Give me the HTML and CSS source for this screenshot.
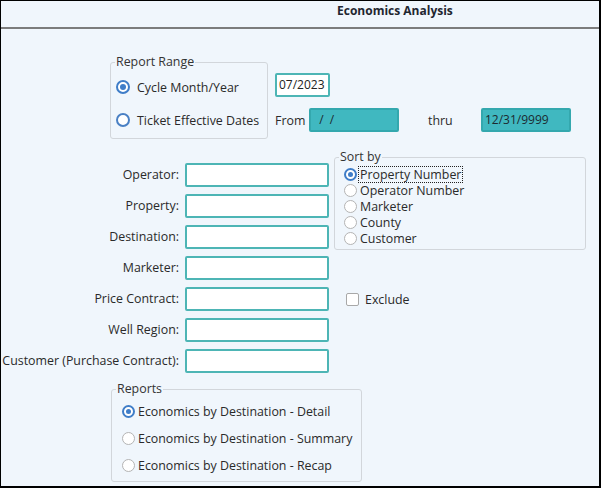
FILE: index.html
```html
<!DOCTYPE html>
<html>
<head>
<meta charset="utf-8">
<link rel="stylesheet" href="styles.css">
</head>
<body>
<div class="window">
  <div class="titlebar">Economics Analysis</div>

  <div class="range-row">
    <fieldset class="box range-box">
      <legend>Report Range</legend>
      <div class="range-opts">
        <div class="opt"><span class="radio blue on"></span>Cycle Month/Year</div>
        <div class="opt"><span class="radio blue"></span>Ticket Effective Dates</div>
      </div>
    </fieldset>
    <div class="range-inputs">
      <div class="field small">07/2023</div>
      <div class="dates">
        <span class="from-lbl">From</span>
        <div class="field date">&nbsp;&nbsp;/&nbsp;&nbsp;/</div>
        <span class="thru-lbl">thru</span>
        <div class="field date">12/31/9999</div>
      </div>
    </div>
  </div>

  <div class="form-grid">
    <div class="lbl r1">Operator:</div><div class="field r1 c2"></div>
    <div class="lbl r2">Property:</div><div class="field r2 c2"></div>
    <div class="lbl r3">Destination:</div><div class="field r3 c2"></div>
    <div class="lbl r4">Marketer:</div><div class="field r4 c2"></div>
    <div class="lbl r5">Price Contract:</div><div class="field r5 c2"></div>
    <div class="lbl r6">Well Region:</div><div class="field r6 c2"></div>
    <div class="lbl r7">Customer (Purchase Contract):</div><div class="field r7 c2"></div>

    <fieldset class="box sort-box">
      <legend>Sort by</legend>
      <div class="sort-opts">
        <div class="sopt"><span class="radio sm on"></span><span class="stext focus">Property Number</span></div>
        <div class="sopt"><span class="radio sm"></span><span class="stext">Operator Number</span></div>
        <div class="sopt"><span class="radio sm"></span><span class="stext">Marketer</span></div>
        <div class="sopt"><span class="radio sm"></span><span class="stext">County</span></div>
        <div class="sopt"><span class="radio sm"></span><span class="stext">Customer</span></div>
      </div>
    </fieldset>

    <div class="exclude"><span class="check"></span>Exclude</div>
  </div>

  <fieldset class="box reports-box">
    <legend>Reports</legend>
    <div class="report-opts">
      <div class="ropt"><span class="radio sm on"></span>Economics by Destination - Detail</div>
      <div class="ropt"><span class="radio sm"></span>Economics by Destination - Summary</div>
      <div class="ropt"><span class="radio sm"></span>Economics by Destination - Recap</div>
    </div>
  </fieldset>
</div>
</body>
</html>
```

FILE: styles.css
```css
* { box-sizing: border-box; }

html, body {
  margin: 0;
  padding: 0;
  background: #f0f6fc;
}

.window {
  width: 601px;
  height: 488px;
  border: 1px solid #000;
  border-right-width: 2px;
  border-bottom-width: 2px;
  background: #f0f6fc;
  font-family: "Open Sans", "Noto Sans", sans-serif;
  font-size: 12px;
  color: #2b2b2b;
  overflow: hidden;
}

.titlebar {
  height: 28px;
  padding: 2px 0 0 336px;
  line-height: 16px;
  font-weight: bold;
  color: #1f2630;
  border-bottom: 2px solid #7c7c7c;
}

/* fieldsets */
.box {
  margin: 0;
  border: 1px solid #d2d6db;
  border-radius: 3px;
  padding: 0 4px;
  min-width: 0;
}

.box legend {
  padding: 0 1px;
  line-height: 14px;
  font-size: 12.4px;
  color: #333;
}

/* report range */
.range-row {
  display: flex;
  align-items: flex-start;
  margin-top: 26px;
  padding-left: 109px;
}

.range-box {
  width: 158px;
  height: 84px;
}

.range-opts {
  display: flex;
  flex-direction: column;
  gap: 11px;
  padding: 7px 0 0 1px;
}

.opt {
  display: flex;
  align-items: center;
  height: 22px;
  gap: 7px;
  font-size: 12.4px;
  color: #2a2a2a;
}

.radio {
  flex: none;
  width: 13px;
  height: 13px;
  border-radius: 50%;
  border: 1px solid #b4b4b4;
  background: #fff;
  display: flex;
  align-items: center;
  justify-content: center;
}

.radio.blue {
  width: 14px;
  height: 14px;
  border: 2px solid #4a80c4;
}

.radio.on {
  border: 2px solid #3f7dc8;
}

.radio.on::after {
  content: "";
  width: 6px;
  height: 6px;
  border-radius: 50%;
  background: #3f7dc8;
}

.radio.sm.on::after {
  width: 5px;
  height: 5px;
}

.range-inputs {
  margin-left: 7px;
  padding-top: 18px;
  display: flex;
  flex-direction: column;
  gap: 11px;
}

.field {
  height: 24px;
  border: 2px solid #4db5b5;
  border-radius: 2px;
  background: #fff;
  line-height: 20px;
  padding-left: 2px;
  font-size: 12px;
  color: #222;
  white-space: pre;
}

.field.small {
  width: 55px;
}

.dates {
  display: flex;
  align-items: center;
}

.from-lbl {
  width: 34px;
  font-size: 12.4px;
}

.thru-lbl {
  width: 53px;
  margin-left: 29px;
  font-size: 12.4px;
}

.field.date {
  width: 90px;
  background: #40b8c0;
  border-color: #34a8ae;
  color: #1c2a30;
}

/* main form grid */
.form-grid {
  display: grid;
  grid-template-columns: 184px 144px 1fr;
  grid-template-rows: repeat(7, 24px);
  row-gap: 7px;
  margin-top: 24px;
}

.lbl {
  grid-column: 1;
  text-align: right;
  padding-right: 6px;
  line-height: 24px;
  font-size: 12.4px;
  color: #2a2a2a;
  white-space: nowrap;
}

.c2 { grid-column: 2; }
.r1 { grid-row: 1; }
.r2 { grid-row: 2; }
.r3 { grid-row: 3; }
.r4 { grid-row: 4; }
.r5 { grid-row: 5; }
.r6 { grid-row: 6; }
.r7 { grid-row: 7; }

.sort-box {
  grid-column: 3;
  grid-row: 1 / span 4;
  align-self: start;
  margin: -13px 0 0 5px;
  width: 252px;
  height: 100px;
}

.sort-opts {
  padding: 2px 0 0 5px;
  display: flex;
  flex-direction: column;
}

.sopt {
  display: flex;
  align-items: center;
  height: 16px;
  gap: 1px;
  font-size: 12.4px;
  color: #2a2a2a;
}

.stext {
  border: 1px dotted transparent;
  padding: 0 1px;
  line-height: 15px;
}

.stext.focus {
  border-color: #222;
}

.exclude {
  grid-column: 3;
  grid-row: 5;
  display: flex;
  align-items: center;
  gap: 6px;
  margin-left: 17px;
  font-size: 12.4px;
  color: #2a2a2a;
}

.check {
  width: 13px;
  height: 13px;
  border: 1px solid #a8a8a8;
  border-radius: 2px;
  background: #fff;
}

/* reports */
.reports-box {
  margin: 9px 0 0 110px;
  width: 251px;
  height: 100px;
}

.report-opts {
  padding: 5px 0 0 6px;
  display: flex;
  flex-direction: column;
  gap: 7px;
}

.ropt {
  display: flex;
  align-items: center;
  height: 20px;
  gap: 3px;
  font-size: 12.4px;
  color: #2a2a2a;
}
```
